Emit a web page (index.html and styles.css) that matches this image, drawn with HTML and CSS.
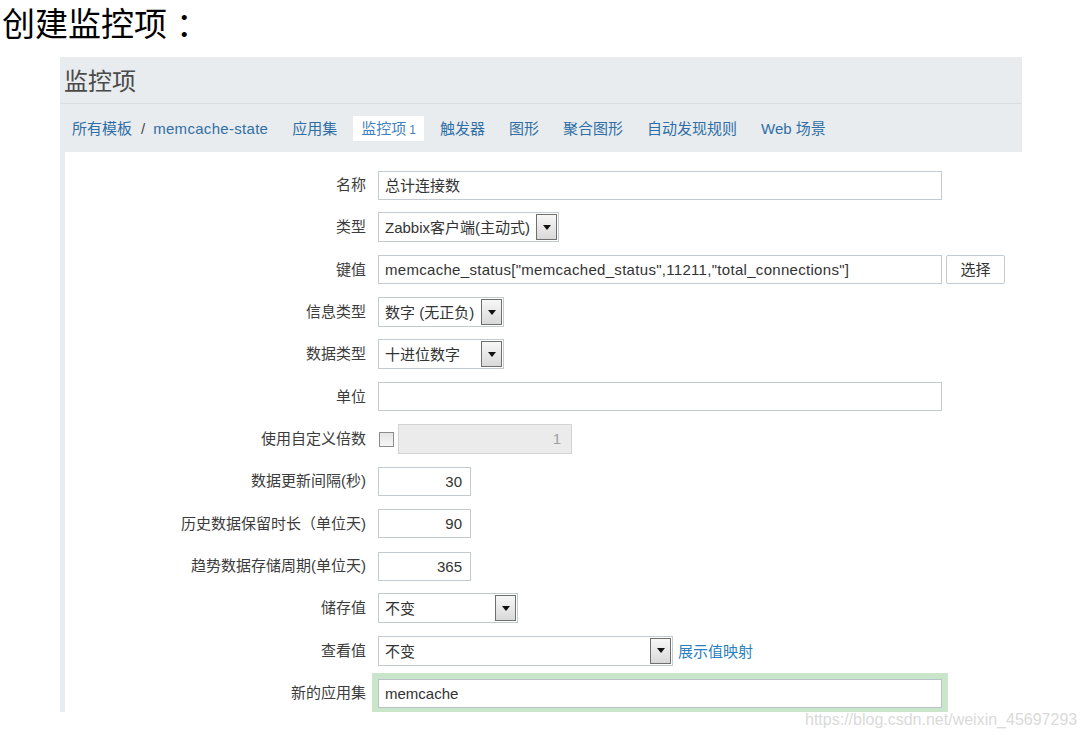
FILE: index.html
```html
<!DOCTYPE html>
<html lang="zh-CN">
<head>
<meta charset="utf-8">
<title>创建监控项</title>
<link rel="stylesheet" href="styles.css">
</head>
<body>
<h1 class="heading">创建监控项<span class="colon">：</span></h1>
<div class="page">
  <div class="header">
    <div class="title">监控项</div>
    <nav class="tabs">
      <span class="tab crumb"><a class="link">所有模板</a><span class="sep">/</span><a class="link">memcache-state</a></span>
      <a class="tab link">应用集</a>
      <span class="tab active">监控项<span class="count">1</span></span>
      <a class="tab link">触发器</a>
      <a class="tab link">图形</a>
      <a class="tab link">聚合图形</a>
      <a class="tab link">自动发现规则</a>
      <a class="tab link">Web 场景</a>
    </nav>
  </div>
  <div class="content">
    <div class="form">
      <div class="lbl">名称</div>
      <div class="field"><div class="input w-full">总计连接数</div></div>

      <div class="lbl">类型</div>
      <div class="field"><div class="select w-type"><span class="val">Zabbix客户端(主动式)</span><span class="arrow"></span></div></div>

      <div class="lbl">键值</div>
      <div class="field"><div class="input w-full key">memcache_status["memcached_status",11211,"total_connections"]</div><div class="button">选择</div></div>

      <div class="lbl">信息类型</div>
      <div class="field"><div class="select w-info"><span class="val">数字 (无正负)</span><span class="arrow"></span></div></div>

      <div class="lbl">数据类型</div>
      <div class="field"><div class="select w-info"><span class="val">十进位数字</span><span class="arrow"></span></div></div>

      <div class="lbl">单位</div>
      <div class="field"><div class="input w-full"></div></div>

      <div class="lbl">使用自定义倍数</div>
      <div class="field"><span class="checkbox"></span><div class="input disabled num-right">1</div></div>

      <div class="lbl">数据更新间隔(秒)</div>
      <div class="field"><div class="input w-num num-right">30</div></div>

      <div class="lbl">历史数据保留时长（单位天)</div>
      <div class="field"><div class="input w-num num-right">90</div></div>

      <div class="lbl">趋势数据存储周期(单位天)</div>
      <div class="field"><div class="input w-num num-right">365</div></div>

      <div class="lbl">储存值</div>
      <div class="field"><div class="select w-store"><span class="val">不变</span><span class="arrow"></span></div></div>

      <div class="lbl">查看值</div>
      <div class="field"><div class="select w-view"><span class="val">不变</span><span class="arrow"></span></div><a class="link map-link">展示值映射</a></div>

      <div class="lbl">新的应用集</div>
      <div class="field"><div class="input w-full focus">memcache</div></div>
    </div>
  </div>
</div>
<div class="watermark">https://blog.csdn.net/weixin_45697293</div>
</body>
</html>
```

FILE: styles.css
```css
html, body {
  margin: 0;
  padding: 0;
  background: #ffffff;
}

body {
  font-family: "Liberation Sans", "Noto Sans CJK SC", sans-serif;
  color: #333333;
  position: relative;
  height: 739px;
  overflow: hidden;
}

.heading {
  margin: 0;
  padding-left: 2px;
  font-family: "Noto Sans CJK SC", sans-serif;
  font-weight: normal;
  font-size: 33px;
  line-height: 44px;
  color: #000000;
}

.heading .colon {
  padding-left: 9px;
}

.page {
  margin: 13px 0 0 60px;
  width: 962px;
  height: 655px;
  overflow: hidden;
}

.header {
  background: #e9ecee;
}

.title {
  height: 46px;
  line-height: 46px;
  padding-left: 4px;
  font-family: "Noto Sans CJK SC", sans-serif;
  font-size: 24px;
  color: #4a4a4a;
  border-bottom: 1px solid #dadee2;
}

.tabs {
  display: flex;
  align-items: center;
  gap: 8px;
  height: 48px;
  padding-left: 4px;
  font-size: 15px;
}

.tab {
  display: block;
  padding: 0 8px;
  height: 25px;
  line-height: 25px;
  white-space: nowrap;
}

.link {
  color: #2f6fa6;
  text-decoration: none;
}

.crumb .sep {
  color: #4a4a4a;
  margin: 0 8px 0 9px;
}

.crumb .link:last-child {
  letter-spacing: 0.3px;
}

.tab.active {
  background: #ffffff;
  color: #3f82c0;
}

.count {
  font-size: 12px;
  margin-left: 3px;
  color: #4a7fb0;
}

.content {
  border-left: 5px solid #e9ecee;
  background: #ffffff;
  height: 560px;
  padding-top: 12px;
}

.form {
  display: grid;
  grid-template-columns: 301px 1fr;
  column-gap: 12px;
  grid-auto-rows: 42.33px;
  align-items: center;
}

.lbl {
  text-align: right;
  font-size: 15px;
  color: #3c3c3c;
  white-space: nowrap;
  line-height: 20px;
}

.field {
  display: flex;
  align-items: center;
}

.input {
  box-sizing: border-box;
  height: 29px;
  line-height: 27px;
  padding: 0 6px;
  border: 1px solid #c3cbd1;
  background: #ffffff;
  font-size: 15px;
  color: #333333;
  white-space: nowrap;
  overflow: hidden;
}

.input.key {
  letter-spacing: 0.3px;
}

.w-full { width: 564px; }
.w-num { width: 93px; }

.num-right {
  text-align: right;
  padding-right: 8px;
}

.input.disabled {
  width: 174px;
  height: 30px;
  background: #ebebeb;
  border-color: #d4d4d4;
  color: #a0a0a0;
  margin-left: 4px;
  padding-right: 10px;
}

.input.focus {
  box-shadow: 0 0 0 6px #c9e5ca;
  border-color: #b9c2c8;
}

.button {
  box-sizing: border-box;
  margin-left: 4px;
  width: 59px;
  height: 29px;
  line-height: 27px;
  text-align: center;
  border: 1px solid #c3cbd1;
  border-radius: 2px;
  background: #ffffff;
  font-size: 15px;
  color: #333333;
}

.select {
  box-sizing: border-box;
  height: 30px;
  border: 1px solid #c3cbd1;
  background: #ffffff;
  display: flex;
  align-items: stretch;
  padding: 1px;
}

.select .val {
  flex: 1;
  padding-left: 5px;
  line-height: 28px;
  font-size: 15px;
  color: #333333;
  white-space: nowrap;
  overflow: hidden;
}

.select .arrow {
  box-sizing: border-box;
  width: 21px;
  border: 1px solid #6f6f6f;
  background: linear-gradient(#f7f7f7, #d9d9d9);
  display: flex;
  align-items: center;
  justify-content: center;
}

.select .arrow::after {
  content: "";
  width: 0;
  height: 0;
  border-left: 4px solid transparent;
  border-right: 4px solid transparent;
  border-top: 5px solid #111111;
}

.w-type { width: 181px; }
.w-info { width: 126px; }
.w-store { width: 140px; }
.w-view { width: 295px; }

.map-link {
  margin-left: 5px;
  font-size: 15px;
  color: #2a7fc0;
}

.checkbox {
  box-sizing: border-box;
  display: block;
  width: 15px;
  height: 15px;
  margin-left: 1px;
  border: 1px solid #8c8c8c;
  background: linear-gradient(#e4e4e4, #f6f6f6);
}

.watermark {
  position: absolute;
  left: 805px;
  top: 710px;
  font-family: "Liberation Sans", sans-serif;
  font-size: 16px;
  line-height: 20px;
  color: #dadada;
  white-space: nowrap;
}
```
